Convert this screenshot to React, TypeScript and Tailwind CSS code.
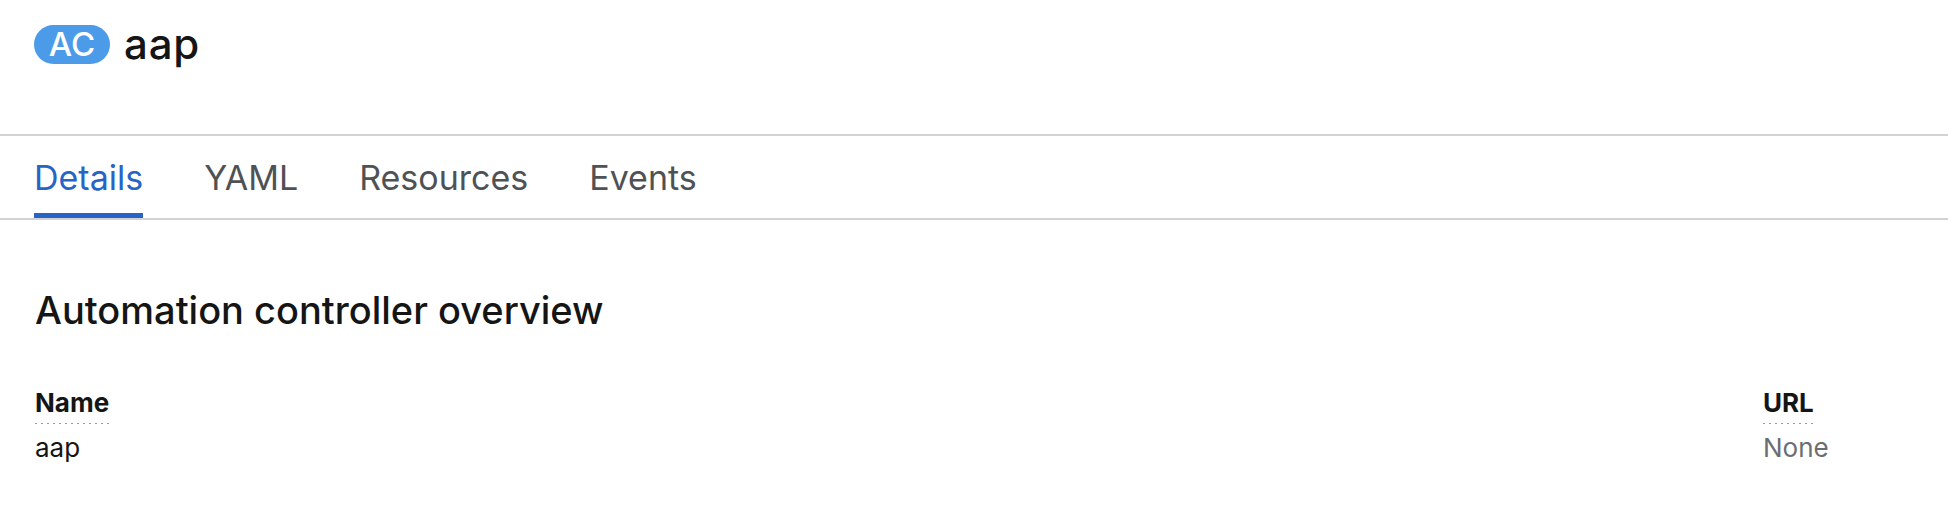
import React from "react";

const TABS = ["Details", "YAML", "Resources", "Events"];

function Term({ children }: { children: React.ReactNode }) {
  return (
    <dt className="self-start flex flex-col">
      <span className="text-[26px] leading-[30px] font-bold text-[#151515]">{children}</span>
      <span className="mt-[5px] h-px w-full bg-[linear-gradient(to_right,#9a9da0_2px,transparent_2px)] bg-[length:6px_1px] bg-repeat-x" />
    </dt>
  );
}

export default function App() {
  return (
    <div className="w-full h-[514px] bg-white font-['Inter',sans-serif] text-[#151515]">
      {/* header */}
      <div className="h-[134px] px-[34px] pt-[24px]">
        <div className="flex items-center gap-[14px]">
          <span className="inline-flex items-center justify-center h-[39px] w-[76px] rounded-full bg-[#4c9be9] text-white text-[33px] leading-none font-medium">
            AC
          </span>
          <h1 className="text-[42px] leading-[40px] font-medium tracking-[0.8px]">aap</h1>
        </div>
      </div>

      {/* tabs */}
      <div className="border-t-2 border-b-2 border-[#d2d2d2]">
        <ul className="flex gap-[61px] px-[34px] h-[82px]">
          {TABS.map((tab, i) => (
            <li key={tab} className="relative flex items-center">
              <span className={`text-[34px] ${i === 0 ? "text-[#2764c5]" : "text-[#4f5255]"}`}>{tab}</span>
              {i === 0 && <span className="absolute left-0 right-0 bottom-0 h-[5px] bg-[#2764c5]" />}
            </li>
          ))}
        </ul>
      </div>

      {/* overview */}
      <div className="px-[35px] pt-[68px]">
        <h2 className="text-[38px] leading-[44px] font-medium">Automation controller overview</h2>
        <dl className="mt-[56px] flex justify-between">
          <div className="flex flex-col">
            <Term>Name</Term>
            <dd className="mt-[8px] text-[26px] leading-[32px] text-[#151515]">aap</dd>
          </div>
          <div className="flex flex-col w-[150px]">
            <Term>URL</Term>
            <dd className="mt-[8px] text-[26px] leading-[32px] text-[#6a6e73]">None</dd>
          </div>
        </dl>
      </div>
    </div>
  );
}
